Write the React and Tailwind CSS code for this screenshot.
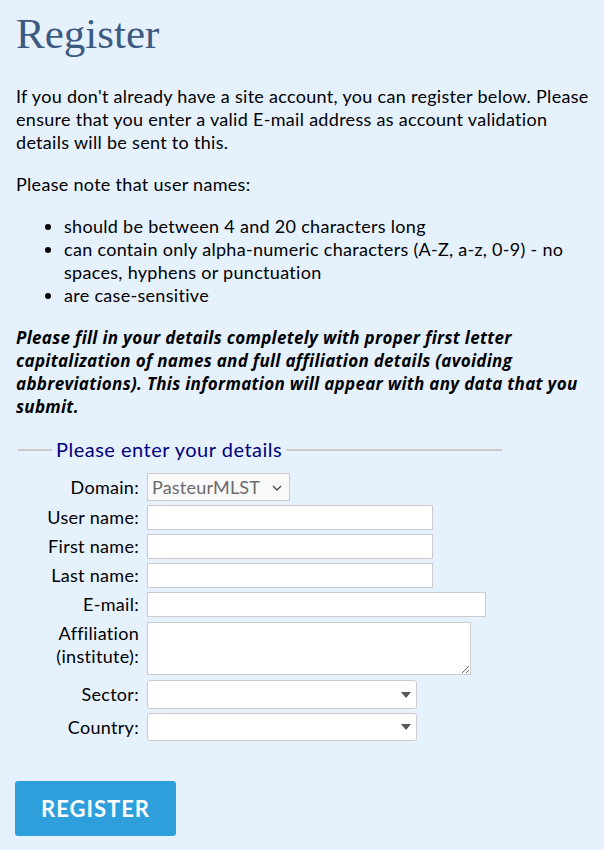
import React from "react";

function Row({ label, children }) {
  return (
    <div className="flex items-center">
      <label className="w-[123px] shrink-0 text-right leading-[23px]">{label}</label>
      <div className="ml-2">{children}</div>
    </div>
  );
}

function Caret() {
  return (
    <svg width="10" height="6" viewBox="0 0 10 6" className="absolute right-[5px] top-1/2 -translate-y-1/2">
      <path d="M0 0h10L5 6z" fill="#555" />
    </svg>
  );
}

export default function App() {
  return (
    <div className="min-h-screen bg-[#e6f1fe] pl-4 pr-2 pt-[10px] pb-4 text-[18px] leading-[23px] tracking-[0.3px] text-black font-['Lato',sans-serif]">
      <h1 className="font-['Liberation_Serif',serif] text-[43px] leading-[48px] tracking-normal text-[#3d5a80]">Register</h1>

      <p className="mt-[27px]">
        If you don't already have a site account, you can register below. Please ensure that you enter a valid E-mail address as
        account validation details will be sent to this.
      </p>
      <p className="mt-[19px]">Please note that user names:</p>
      <ul className="mt-[19px] list-disc pl-12">
        <li>should be between 4 and 20 characters long</li>
        <li>can contain only alpha-numeric characters (A-Z, a-z, 0-9) - no spaces, hyphens or punctuation</li>
        <li>are case-sensitive</li>
      </ul>
      <p className="mt-[19px] font-['Open_Sans',sans-serif] text-[17px] font-bold italic tracking-[0.3px]">
        Please fill in your details completely with proper first letter capitalization of names and full affiliation details
        (avoiding abbreviations). This information will appear with any data that you submit.
      </p>

      <form className="mt-[20px]" action="#">
        <div className="ml-[2px] flex w-[484px] items-center">
          <div className="h-[2px] w-[34px] bg-[#cccccc]" />
          <span className="px-[4px] text-[20px] tracking-[0.5px] text-[#00007f]">Please enter your details</span>
          <div className="h-[2px] flex-1 bg-[#cccccc]" />
        </div>

        <div className="mt-[12px] flex flex-col gap-[4px]">
          <Row label="Domain:">
            <div className="relative flex h-[28px] w-[143px] items-center border border-[#cccccc] bg-[#f9f9f9] pl-[4px] text-[#6b6b6b] tracking-[0.2px]">
              PasteurMLST
              <svg width="10" height="6" viewBox="0 0 10 6" className="absolute right-[7px] top-[11px]">
                <path d="M1 1l4 4 4-4" fill="none" stroke="#444" strokeWidth="1.3" />
              </svg>
            </div>
          </Row>
          <Row label="User name:">
            <input className="block h-[25px] w-[286px] border border-[#cccccc] bg-white" />
          </Row>
          <Row label="First name:">
            <input className="block h-[25px] w-[286px] border border-[#cccccc] bg-white" />
          </Row>
          <Row label="Last name:">
            <input className="block h-[25px] w-[286px] border border-[#cccccc] bg-white" />
          </Row>
          <Row label="E-mail:">
            <input className="block h-[25px] w-[339px] border border-[#cccccc] bg-white" />
          </Row>
          <div className="mt-[1px] flex items-start">
            <label className="w-[123px] shrink-0 text-right leading-[23px]">
              Affiliation
              <br />
              (institute):
            </label>
            <textarea className="ml-2 block h-[53px] w-[324px] border border-[#cccccc] bg-white" />
          </div>
          <Row label="Sector:">
            <div className="relative mt-[1px] h-[29px] w-[270px] rounded-[3px] border border-[#cccccc] bg-white">
              <Caret />
            </div>
          </Row>
          <Row label="Country:">
            <div className="relative h-[28px] w-[270px] rounded-[3px] border border-[#cccccc] bg-white">
              <Caret />
            </div>
          </Row>
        </div>

        <button
          type="submit"
          className="-ml-px mt-[40px] h-[55px] w-[161px] rounded-[3px] bg-[#2f9fdc] text-[22px] font-bold tracking-[1px] text-white"
        >
          REGISTER
        </button>
      </form>
    </div>
  );
}
